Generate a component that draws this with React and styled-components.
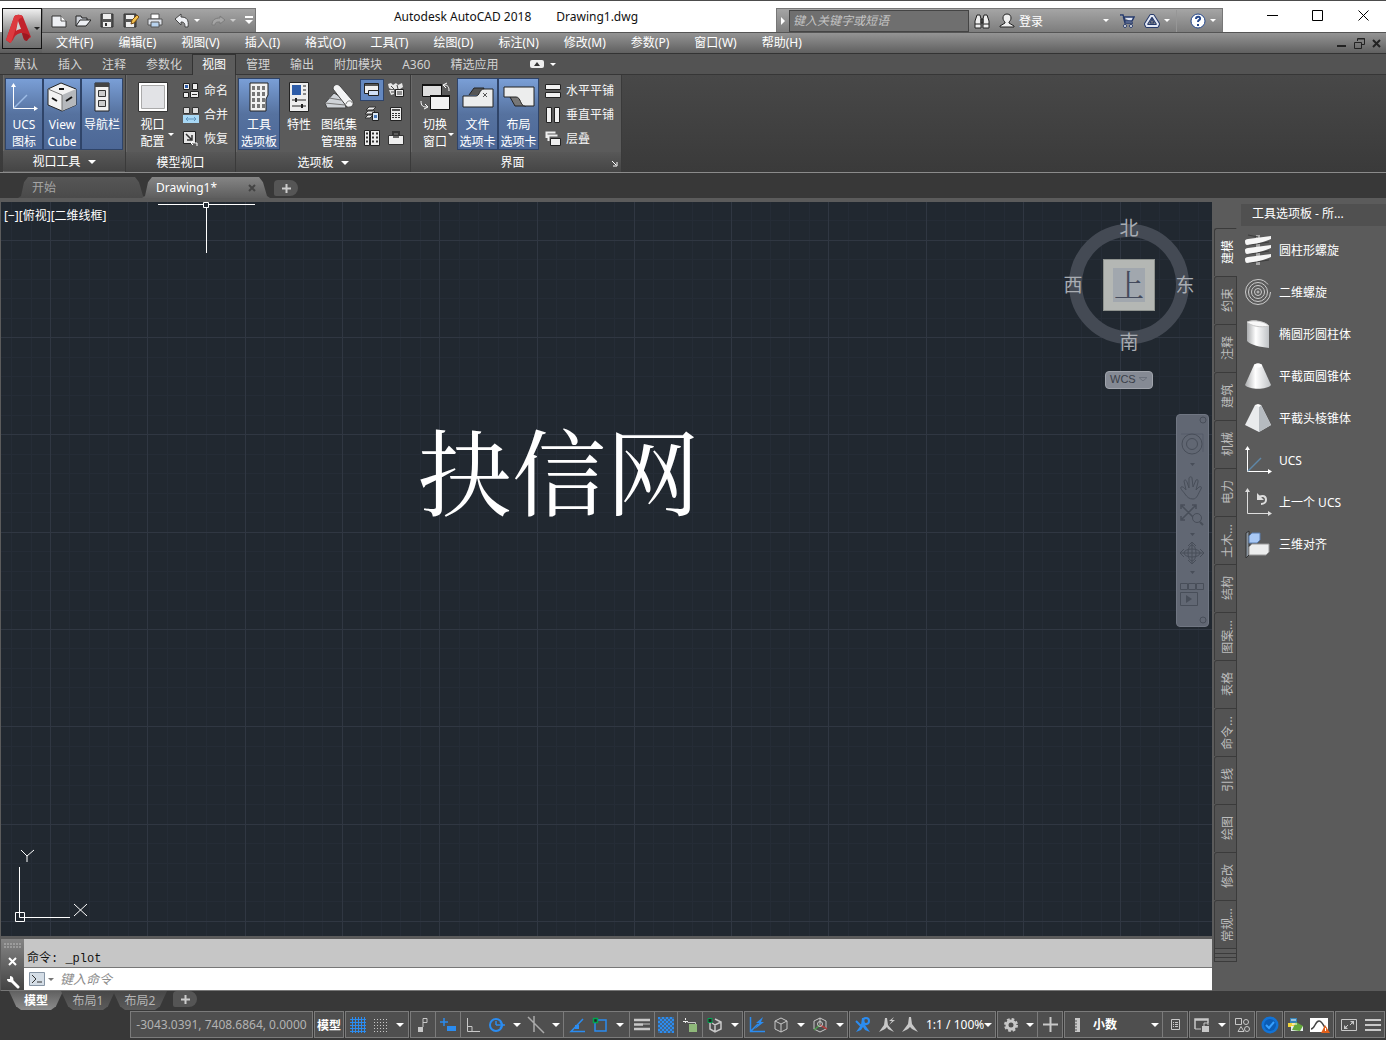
import { Fragment } from "react";
import styled, { createGlobalStyle } from "styled-components";

const GlobalStyle = createGlobalStyle`
* { box-sizing: border-box; }
body {
    margin: 0;
    background: #383838;
}
body, button, input, select {
    font-family: "Noto Sans", "Noto Sans CJK SC", sans-serif;
    font-size: 12px;
}
button {
    margin: 0;
    padding: 0;
    border: none;
    background: none;
    color: inherit;
}
svg { display: block; flex: none; }
`;

/* ---------- icons ---------- */

const Icon = ({ w = 16, h = w, vb, children }) => (
    <svg width={w} height={h} viewBox={vb || `0 0 ${w} ${h}`} fill="none" aria-hidden="true">{children}</svg>
);

const Caret = ({ color = "#fff", w = 8 }) => (
    <Icon w={w} h={w / 2} vb="0 0 8 4"><path d="M0 0h8L4 4z" fill={color} /></Icon>
);

const Logo = () => (
    <Icon w={26} h={30}>
        <path d="M0 26L8 3c1-3 8-3 9 0l8 20-4 3c-2 0-3-1-4-4l-1-3c-4 0-7 2-9 7l-3 3z" fill="#c3222b" />
        <path d="M8 3c1-3 8-3 9 0l-4 2L5 29l-5-3z" fill="#dd3a3f" />
        <path d="M12 7l3 8c-2 0-4 1-5 2z" fill="#d2d2d2" />
        <path d="M16 19c3 0 6 1 8 3l-3 5c-2 0-3-1-4-4z" fill="#9c1820" />
    </Icon>
);

const NewFile = () => <Icon><path d="M1 3h9l5 5v6H1z" fill="#eef0f4" stroke="#333" /><path d="M10 3v5h5" stroke="#555" fill="#fff" /></Icon>;
const OpenFile = () => <Icon><path d="M1 13V3h5l1 2h5v3" fill="#cfd3da" stroke="#222" /><path d="M1 13l4-6h11l-5 6z" fill="#eef0f4" stroke="#222" /></Icon>;
const Save = () => <Icon><path d="M2 1h12v13H2z" fill="#555" stroke="#333" /><path d="M4 1h8v5H4zM4 9h8v5H4z" fill="#eee" /><path d="M6 10h2v3H6z" fill="#333" /></Icon>;
const SaveAs = () => <Icon><path d="M1 1h12v13H1z" fill="#555" stroke="#333" /><path d="M3 2h8v4H3zM3 9h8v5H3z" fill="#eee" /><path d="M8 11l1-4 5-5 2 2-5 6z" fill="#f2c14e" stroke="#7a4d12" /></Icon>;
const Printer = () => <Icon><path d="M4 1h8v5H4z" fill="#fff" stroke="#555" /><path d="M1 6h14v6H1z" fill="#dfe3ea" stroke="#555" /><path d="M4 9h8v5H4z" fill="#b9d3ee" stroke="#555" /></Icon>;
const Undo = () => <Icon><path d="M1 6l6-5v3c6 0 8 3 7 10h-3c0-4-1-5-4-5v3z" fill="#eef0f4" stroke="#444" /></Icon>;
const Redo = () => <Icon><path d="M15 7L10 3v2C5 5 2 7 2 12h3c0-3 2-3 5-3v2z" fill="#a5a5a5" stroke="#7c7c7c" /></Icon>;
const QatMore = () => <Icon w={10} h={9}><path d="M1 0h8v2H1zM1 4h8L5 8z" fill="#fff" /></Icon>;
const Binoculars = () => <Icon><path d="M3 2h3l1 4v9H1V8zM10 2h3l2 6v7H9V6z" fill="#eee" stroke="#222" /><path d="M7 6h2v4H7zM1 11h6M9 11h6" stroke="#222" /></Icon>;
const User = () => <Icon><path d="M8 1c3 0 4 2 4 4s-1 3-2 4v1l5 3v1H1v-1l5-3V9C5 8 4 7 4 5s1-4 4-4z" fill="#eee" stroke="#222" /></Icon>;
const Cart = () => <Icon><path d="M1 2h3l2 8h8M5 4h10l-2 4H6z" fill="#dfe5f5" stroke="#263a6b" strokeWidth="1.500" /><circle cx="6" cy="13" r="1.500" fill="#fff" stroke="#263a6b" /><circle cx="12" cy="13" r="1.500" fill="#fff" stroke="#263a6b" /></Icon>;
const A360 = () => <Icon><path d="M7 3h2l5 8-1 2H3l-1-2z" stroke="#263a6b" strokeWidth="4" strokeLinejoin="round" /><path d="M7 3h2l5 8-1 2H3l-1-2z" stroke="#e4e9f5" strokeWidth="2" /><path d="M6 10l2-4 2 4z" stroke="#263a6b" /></Icon>;
const Help = () => <Icon><circle cx="8" cy="8" r="7" fill="#fff" stroke="#26488c" /><path d="M6 6c0-3 5-3 4 0 0 1-2 1-2 3M8 11v2" stroke="#26488c" strokeWidth="2" /></Icon>;
const WinMin = () => <Icon w={11}><path d="M0 5.500h11" stroke="#000" /></Icon>;
const WinMax = () => <Icon w={11}><path d="M.5.5h10v10H.5z" stroke="#000" /></Icon>;
const WinClose = () => <Icon w={11}><path d="M.5.5l10 10M10.500.5l-10 10" stroke="#000" /></Icon>;
const DocMin = () => <Icon w={10}><path d="M0 8h9" stroke="#222" strokeWidth="2" /></Icon>;
const DocMax = () => <Icon w={11}><path d="M3.500 3V.5h7v6H8" stroke="#222" /><path d="M.5 4.500h7v6h-7zM4 1h7" stroke="#222" /></Icon>;
const DocClose = () => <Icon w={9}><path d="M1 1l7 7M8 1L1 8" stroke="#222" strokeWidth="2" /></Icon>;

const UcsAxes = ({ diagonal = "#9dbce6" }) => (
    <Icon w={28} h={30}>
        <path d="M3.500 4v22.500H25" stroke="#fff" /><path d="M1 5l2.500-4L6 5zM24 24l4 2.500-4 2.500z" fill="#fff" />
        <path d="M4 26l13-13" stroke={diagonal} strokeWidth="1.500" />
    </Icon>
);
const ViewCubeIcon = () => (
    <Icon w={30}>
        <path d="M1 7l13-6 15 6v16l-14 6L1 23z" fill="#f2f2f2" stroke="#222" />
        <path d="M15 13l14-6v16l-14 6z" fill="#b5b8bc" /><path d="M1 7l14 6v16" stroke="#777" />
        <path d="M12 7h5M5 16l5 3M19 19l6-4" stroke="#111" strokeWidth="2" />
    </Icon>
);
const NavBarIcon = () => <Icon w={16} h={30}><path d="M1 1h14v28H1z" fill="#f2f2f2" stroke="#222" /><path d="M1 1h14v4H1z" fill="#444" /><path d="M4.500 8.500h7v6h-7zM4.500 18.500h7v6h-7z" fill="#ccc" stroke="#333" /></Icon>;
const ViewportIcon = () => <Icon w={30}><path d="M.5.5h29v29H.5z" fill="#fff" stroke="#333" /><path d="M3.500 3.500h23v23h-23z" fill="#e2e3e6" stroke="#aaa" /></Icon>;
const ToolPaletteIcon = () => (
    <Icon w={20} h={30}>
        <path d="M1 1h18v12l-2 4v12H1z" fill="#f2f2f2" stroke="#222" />
        {[4, 10, 16, 22].map((y) => <path key={y} d={`M3 ${y}h3v4H3zM8 ${y}h3v4H8zM13 ${y}h3v4h-3z`} fill="#777" />)}
    </Icon>
);
const PropertiesIcon = () => <Icon w={20} h={30}><path d="M.5.5h19v29H.5z" fill="#eee" stroke="#222" /><path d="M3 3h9v10H3z" fill="#2d5ca8" /><path d="M14 4h3M14 8h3M14 12h3M3 18h14M3 24h14" stroke="#222" /><path d="M7 16v4M13 22v4" stroke="#222" strokeWidth="2" /></Icon>;
const SheetSetIcon = () => (
    <Icon w={30} h={28}>
        <path d="M1 20l9-10 10 6 2 9H3z" fill="#cfd3d8" stroke="#444" /><path d="M1 20l20 2M5 15l12 2" stroke="#777" />
        <path d="M9 6c0-4 4-6 7-3l12 14c3 4 0 8-5 7z" fill="#f3f4f5" stroke="#444" /><path d="M28 20c0-3-5-3-6 1" stroke="#777" />
    </Icon>
);
const SwitchIcon = () => <Icon w={32} h={30}><path d="M3.500 2.500h19v12h-19z" fill="#ddd" stroke="#111" /><path d="M3 2h20v2H3z" fill="#111" /><path d="M11.500 13.500h19v14h-19z" fill="#f1f1f1" stroke="#111" /><path d="M11 13h20v2H11z" fill="#111" /><path d="M25 3c4 0 5 2 5 6M28 1l-4 2 3 3M2 19c0 5 2 6 6 6M6 22l3 3-4 2" stroke="#fff" /></Icon>;
const FileTabIcon = () => <Icon w={32} h={24}><path d="M7 10l5-7h10l-3 7" fill="#555" stroke="#222" /><path d="M1 22V11h13c4 0 3-7 8-7h9v18z" fill="#eceded" stroke="#222" /><path d="M21 8l4 4M25 8l-4 4" stroke="#555" /></Icon>;
const LayoutTabIcon = () => <Icon w={32} h={24}><path d="M7 12l5 9h11l-4-9" fill="#777" stroke="#222" /><path d="M1 2v10h12c5 0 4 9 9 9h9V2z" fill="#eceded" stroke="#222" /></Icon>;

const NamedIcon = () => <Icon><path d="M.5.5h6v6h-6zM9.500.5h5v6h-5zM.5 9.500h5v5h-5z" fill="#eee" stroke="#222" /><path d="M2 2h3v3H2z" fill="#2d5ca8" /><path d="M7.500 8.500h8v6h-8z" fill="#eee" stroke="#222" /><path d="M9 11.500h5" stroke="#333" /></Icon>;
const JoinIcon = () => <Icon><path d="M.5.5h6v6h-6zM9.500.5h6v6h-6z" fill="#ddd" stroke="#333" /><path d="M0 8h16v8H0z" fill="#a8d8f5" /><path d="M4 12h8M5 10l-2 2 2 2M11 10l2 2-2 2" stroke="#5f93ba" /></Icon>;
const RestoreIcon = () => <Icon><path d="M.5.5h12v12H.5z" fill="#e4e4e4" stroke="#222" /><path d="M3 3l6 6M9 4v5H4" stroke="#333" strokeWidth="1.500" /><path d="M8 12h6v3M10 10l-2 2 2 2" stroke="#fff" /></Icon>;
const CmdLineIcon = () => <Icon><path d="M.5 1.500h14v10H.5z" fill="#f0f0f0" stroke="#222" /><path d="M1 2h13v2H1z" fill="#555" /><path d="M4.500 8.500h10v5h-10z" fill="#cfe0f7" stroke="#222" /></Icon>;
const DesignIcon = () => <Icon><path d="M0 2l3-1 2 2 3-2 2 2 4-2 1 4-3 2H3L1 6zM1 8h5v4l-3 1z" fill="#e6e6e6" /><path d="M3 4l3 3M9 3l1 4M3 10h3" stroke="#444" /><path d="M7.500 7.500h8v7h-8z" fill="#eee" stroke="#222" /><path d="M9 10h5M9 12h5" stroke="#333" /></Icon>;
const LayersIcon = () => <Icon><path d="M5 1h7l-3 3H2zM4 5h7L8 8H1zM4 9h5l-3 3H1z" fill="#eee" stroke="#333" /><path d="M8.500 6.500h6v8h-6z" fill="#dce8f5" stroke="#222" /><path d="M10 9h3v3h-3z" fill="#4d7cba" /></Icon>;
const CalcIcon = () => <Icon><path d="M2.500 1.500h11v13h-11z" fill="#eee" stroke="#222" /><path d="M4 3h8v2H4z" fill="#555" />{[7, 9, 11].map((y) => <path key={y} d={`M4 ${y}.500h2M7 ${y}.500h2M10 ${y}.500h2`} stroke="#333" />)}</Icon>;
const SheetIcon = () => <Icon><path d="M.5.5h5v15h-5z" fill="#eee" stroke="#222" /><path d="M6.500.5h9v15h-9z" fill="#eee" stroke="#222" /><path d="M2 3.500h2M2 7.500h2M2 11.500h2M8 3.500h2M12 3.500h2M8 7.500h2M12 7.500h2M8 11.500h2M12 11.500h2" stroke="#333" strokeWidth="2" /></Icon>;
const ToolboxIcon = () => <Icon><path d="M.5 5.500h15v9H.5z" fill="#eee" stroke="#333" /><path d="M5 5V2h6v3" stroke="#333" strokeWidth="2" /><path d="M5 6h6v2H5z" fill="#666" /></Icon>;
const TileHIcon = () => <Icon><path d="M.5 1.500h15v5H.5zM.5 9.500h15v5H.5z" fill="#f1f1f1" stroke="#222" /></Icon>;
const TileVIcon = () => <Icon><path d="M1.500.5h5v15h-5zM9.500.5h5v15h-5z" fill="#f1f1f1" stroke="#222" /></Icon>;
const CascadeIcon = () => <Icon><path d="M1.500 7V1.500h9M3.500 10V4.500h9" stroke="#eee" strokeWidth="2" /><path d="M5.500 7.500h10v7h-10z" fill="#eee" stroke="#222" /></Icon>;

/* ---------- layout ---------- */

const Page = styled.div`
display: flex;
flex-direction: column;
min-height: 100vh;
border-top: 1px solid #4c4c4c;
background: #383838;
color: #f0f0f0;
`;

const Header = styled.header`
display: grid;
grid-template-columns: 42px 1fr;
background: linear-gradient(#fff 31px, #939393 31px, #5b5b5b);
`;

const AppButton = styled.button`
display: flex;
align-items: center;
gap: 2px;
height: 41px;
margin: 7px 0 4px 2px;
padding-left: 3px;
border: 1px solid #111;
background: linear-gradient(#efefef, #8a8a8a 60%, #6e6e6e);
`;

const TitleBar = styled.div`
display: flex;
align-items: flex-end;
height: 31px;
background: #fff;
`;

const Toolbar = styled.div`
display: flex;
align-items: center;
height: 24px;
border: 1px solid #777;
border-bottom: none;
background: linear-gradient(#a5a5a5, #7d7d7d);
`;

const Divider = styled.span`
width: 1px;
height: 22px;
margin: 0 6px;
background: #969696;
`;

const ToolButton = styled.button`
display: flex;
align-items: center;
justify-content: center;
gap: 4px;
width: ${(p) => p.$w}px;
height: 22px;
`;

const Title = styled.h1`
flex: 1;
margin: 0;
padding-bottom: 7px;
font-size: 12px;
font-weight: 400;
line-height: 17px;
text-align: center;
white-space: pre;
color: #111;
`;

const Search = styled.input`
width: 180px;
height: 22px;
padding: 0 3px;
border: 1px solid #444;
background: #6f6f6f;
color: #fff;
outline: none;

&::placeholder {
    font-style: italic;
    color: #c4c4c4;
    opacity: 1;
}
`;

const Login = styled.button`
display: flex;
align-items: center;
justify-content: space-between;
width: 90px;
color: #fff;
`;

const WindowButtons = styled.div`
display: flex;
height: 31px;
padding-left: 26px;
`;

const WindowButton = styled.button`
display: grid;
place-items: center;
width: ${(p) => p.$w || 46}px;
height: 29px;
`;

const MenuBar = styled.nav`
display: flex;
align-items: center;
gap: 25px;
height: 21px;
padding: 0 5px 0 14px;
border-top: 1px solid #555;
background: linear-gradient(#949494, #606060);
color: #fff;
line-height: 18px;
`;

const DocButtons = styled.div`
display: flex;
gap: 7px;
margin-left: auto;
`;

const RibbonTabs = styled.div`
display: flex;
align-items: stretch;
height: 22px;
padding-left: 4px;
border-top: 1px solid #333;
border-bottom: 1px solid #363636;
background: #535353;
`;

const RibbonTab = styled.button`
height: 21px;
padding: 0 10px;
line-height: 20px;
color: #d2d2d2;
${(p) => p.$active && `
    background: #5c5c5c;
    color: #fff;
    box-shadow: inset 1px 1px #333, inset -1px 0 #333;
`}
`;

const RibbonToggle = styled.button`
display: flex;
align-items: center;
gap: 6px;
margin-left: 22px;
`;

const Ribbon = styled.div`
display: flex;
padding-left: 3px;
border-bottom: 1px solid #8b8b8b;
background: linear-gradient(#484848, #3a3a3a);
`;

const RibbonPanel = styled.section`
display: flex;
flex-direction: column;
border-right: 1px solid #3a3a3a;
background: #5b5b5b;
box-shadow: inset 1px 0 #6a6a6a;
`;

const PanelBody = styled.div`
display: flex;
padding: 3px 2px 1px;
`;

const PanelTitle = styled.div`
display: flex;
align-items: center;
justify-content: center;
gap: 7px;
height: 20px;
padding-top: 2px;
background: linear-gradient(#585858, #454545);
color: #fff;
line-height: 18px;
`;

const Launcher = styled.button`
margin-left: auto;
padding-right: 3px;
`;

const BigButton = styled.button`
position: relative;
display: flex;
flex-direction: column;
align-items: center;
width: ${(p) => p.$w}px;
height: 72px;
line-height: 17px;
white-space: pre;
color: #fff;
${(p) => p.$active && `
    background: linear-gradient(#7ba0d8, #56729f 50%, #4c6796);
    box-shadow: inset 0 0 0 1px #2f4469;
`}

.icon {
    display: grid;
    place-items: center;
    height: 38px;
}
.caret {
    position: absolute;
    right: 3px;
    bottom: 14px;
}
`;

const SmallList = styled.div`
display: grid;
grid-template-columns: repeat(${(p) => p.$cols || 1}, auto);
grid-auto-rows: 24px;
padding-top: 1px;
`;

const SmallButton = styled.button`
display: flex;
align-items: center;
gap: 5px;
padding: 0 5px 0 6px;
line-height: 20px;
color: #f5f5f5;
`;

const IconButton = styled.button`
display: grid;
place-items: center;
width: 24px;
height: 22px;
${(p) => p.$active && `
    background: #6488c0;
    box-shadow: inset 0 0 0 1px #2f4469;
`}
`;

const FileTabs = styled.div`
display: flex;
align-items: flex-end;
height: 29px;
padding-left: 18px;
border-bottom: 4px solid #5b5b5b;
`;

const FileTab = styled.div`
display: flex;
align-items: center;
justify-content: space-between;
width: 128px;
height: 21px;
margin-right: -4px;
padding: 0 14px;
background: ${(p) => (p.$active ? "linear-gradient(#858585, #5e5e5e)" : "linear-gradient(#565656, #4a4a4a)")};
clip-path: polygon(0 100%, 3px 90%, 6px 25%, 10px 0, calc(100% - 11px) 0, calc(100% - 7px) 25%, calc(100% - 3px) 90%, 100% 100%);
color: ${(p) => (p.$active ? "#fff" : "#a5a5a5")};
line-height: 20px;
`;

const AddTab = styled.button`
display: grid;
place-items: center;
width: 24px;
height: 16px;
margin: 0 0 2px 8px;
background: #555;
border-radius: 4px 8px 8px 2px;
`;

const Workspace = styled.main`
flex: 1;
display: flex;
border-left: 1px solid #5b5b5b;
`;

const DrawArea = styled.div`
flex: 1;
display: flex;
flex-direction: column;
min-width: 0;
`;

const Canvas = styled.div`
flex: 1;
position: relative;
overflow: hidden;
background: #212830;
`;

const GridLayer = styled.svg`
position: absolute;
inset: 0;
`;

const Placed = styled.div`
position: absolute;
left: ${(p) => p.$left};
right: ${(p) => p.$right};
top: ${(p) => p.$top};
bottom: ${(p) => p.$bottom};
`;

const ViewLabel = styled(Placed)`
line-height: 18px;
color: #fff;
`;

const DrawnText = styled(Placed)`
font-family: SimSun, "Noto Serif CJK SC", "Noto Sans CJK SC", serif;
font-size: 94px;
font-weight: 400;
line-height: 94px;
white-space: nowrap;
color: #fff;
`;

const Compass = styled(Placed)`
display: grid;
grid-template-columns: 24px 1fr 24px;
grid-template-rows: 24px 1fr 24px;
place-items: center;
width: 136px;
height: 138px;
font-size: 19px;
line-height: 24px;
color: #a9adb3;

&::before {
    content: "";
    position: absolute;
    inset: 8px 8px 10px;
    border: 13px solid #444a54;
    border-radius: 50%;
}
span { z-index: 1; }
.n, .s { grid-column: 1 / 4; }
`;

const CubeFace = styled.button`
display: grid;
place-items: center;
width: 52px;
height: 52px;
border: 1px solid #8f938f;
background: #b4b7b4;

span {
    width: 32px;
    height: 34px;
    background: #a1a7ae;
    font-family: SimSun, "Noto Serif CJK SC", "Noto Sans CJK SC", serif;
    font-size: 30px;
    line-height: 30px;
    color: #454b5c;
}
`;

const WcsButton = styled(Placed).attrs({ as: "button" })`
display: flex;
align-items: center;
justify-content: space-between;
width: 48px;
height: 18px;
padding: 0 5px 2px 4px;
border: 1px solid #a0a4ac;
border-radius: 4px;
background: #858a94;
font-family: "Liberation Sans", sans-serif;
font-size: 11px;
color: #3a3f49;
`;

const NavBar = styled(Placed)`
display: flex;
flex-direction: column;
align-items: center;
width: 33px;
height: 213px;
border-radius: 4px;
border: 1px solid #707682;
background: #616773;
`;

const CommandLine = styled.section`
display: grid;
grid-template-columns: 23px 1fr;
height: 55px;
border-top: 3px solid #5b5b5b;
border-bottom: 1px solid #777;
`;

const CommandHandle = styled.div`
display: flex;
flex-direction: column;
align-items: center;
justify-content: space-between;
padding: 4px 0 1px;
background: linear-gradient(#848484, #444);
`;

const History = styled.div`
height: 29px;
padding: 10px 3px 0;
border-bottom: 1px solid #777;
background: #c6c6c6;
font-family: "Liberation Mono", "Noto Sans CJK SC", monospace;
line-height: 20px;
color: #111;
white-space: pre;
`;

const Prompt = styled.label`
display: flex;
align-items: center;
gap: 3px;
height: 22px;
padding-left: 5px;
background: #fff;

input {
    flex: 1;
    padding: 0 3px;
    border: none;
    outline: none;
    font-size: 13px;
}
input::placeholder {
    font-style: italic;
    color: #8c8c8c;
    opacity: 1;
}
`;

const Palette = styled.aside`
display: grid;
grid-template-columns: 23px 1fr;
grid-template-rows: 26px 1fr;
width: 174px;
padding-left: 2px;
background: #5b5b5b;
`;

const PaletteTitle = styled.div`
grid-column: 2;
margin: 2px 0 2px 4px;
padding-left: 11px;
background: #505050;
line-height: 20px;
color: #fff;
white-space: nowrap;
`;

const PaletteTabs = styled.div`
grid-row: 2;
grid-column: 1;
`;

const PaletteTab = styled.button`
display: grid;
place-items: center;
width: 23px;
height: 48px;
padding-left: 4px;
border: 1px solid #3b3b3b;
border-bottom: none;
border-radius: 3px 0 0 0;
background: ${(p) => (p.$active ? "#5b5b5b" : "#535353")};
border-right-color: ${(p) => (p.$active ? "#5b5b5b" : "#3b3b3b")};
color: ${(p) => (p.$active ? "#fff" : "#bdbdbd")};

span {
    writing-mode: vertical-rl;
    text-orientation: sideways;
    transform: rotate(180deg);
    line-height: 18px;
}
`;

const TabStack = styled.div`
height: ${(p) => p.$h}px;
border: 1px solid #3b3b3b;
border-bottom-width: ${(p) => (p.$last ? 1 : 0)}px;
`;

const Tools = styled.div`
padding-left: 6px;
padding-top: 1px;
`;

const Tool = styled.button`
display: flex;
align-items: center;
gap: 6px;
height: 42px;
color: #fff;
white-space: nowrap;

.icon {
    display: grid;
    place-items: center;
    width: 30px;
}
`;

const LayoutTabs = styled.div`
display: flex;
align-items: flex-start;
height: 20px;
padding-left: 9px;
`;

const LayoutTab = styled.button`
width: 54px;
height: 19px;
margin-right: -2px;
background: ${(p) => (p.$active ? "linear-gradient(#606060, #8c8c8c)" : "linear-gradient(#474747, #5c5c5c)")};
clip-path: polygon(0 0, 100% 0, calc(100% - 7px) 80%, calc(100% - 12px) 100%, 12px 100%, 7px 80%);
color: ${(p) => (p.$active ? "#fff" : "#b5b5b5")};
font-weight: ${(p) => (p.$active ? 700 : 400)};
line-height: 19px;
`;

const StatusBar = styled.footer`
display: flex;
justify-content: flex-end;
gap: 1px;
height: 29px;
padding: 0 1px 2px;
`;

const StatusGroup = styled.div`
display: flex;
height: 27px;
border: 1px solid #7b7b7b;
background: #4f4f4f;
`;

const StatusCell = styled.button`
display: flex;
align-items: center;
justify-content: center;
width: ${(p) => p.$w}px;
color: #fff;
font-weight: ${(p) => (p.$bold ? 700 : 400)};
white-space: nowrap;
${(p) => p.$sep && "border-left: 1px solid #7b7b7b;"}
`;

const Coords = styled(StatusCell)`
color: #b3b3b3;
`;

const StatusSelect = styled.label`
display: flex;
align-items: center;
width: 73px;
padding: 0 3px 0 4px;

select {
    width: 58px;
    padding: 0;
    appearance: none;
    border: none;
    outline: none;
    background: transparent;
    color: #fff;
    font-weight: ${(p) => (p.$bold ? 700 : 400)};
    text-overflow: clip;
}
`;

/* ---------- header ---------- */

const menus = ["文件(F)", "编辑(E)", "视图(V)", "插入(I)", "格式(O)", "工具(T)", "绘图(D)", "标注(N)", "修改(M)", "参数(P)", "窗口(W)", "帮助(H)"];
const ribbonTabs = ["默认", "插入", "注释", "参数化", "视图", "管理", "输出", "附加模块", "A360", "精选应用"];

const MenuItem = styled.button`
color: #fff;
line-height: 18px;
`;

function TopBar() {
    return (
        <Header>
            <AppButton aria-label="应用程序菜单"><Logo /><Caret color="#222" w={6} /></AppButton>
            <div>
                <TitleBar>
                    <Toolbar>
                        <ToolButton $w={32} aria-label="新建"><NewFile /></ToolButton>
                        <ToolButton $w={16} aria-label="打开"><OpenFile /></ToolButton>
                        <ToolButton $w={32} aria-label="保存"><Save /></ToolButton>
                        <ToolButton $w={16} aria-label="另存为"><SaveAs /></ToolButton>
                        <ToolButton $w={32} aria-label="打印"><Printer /></ToolButton>
                        <ToolButton $w={32} aria-label="放弃"><Undo /><Caret w={6} /></ToolButton>
                        <ToolButton $w={40} aria-label="重做"><Redo /><Caret color="#ccc" w={6} /></ToolButton>
                        <ToolButton $w={12} aria-label="自定义"><QatMore /></ToolButton>
                    </Toolbar>
                    <Title>{"Autodesk AutoCAD 2018        Drawing1.dwg"}</Title>
                    <Toolbar>
                        <ToolButton $w={12} aria-label="折叠"><Icon w={4} h={8}><path d="M0 0v8l4-4z" fill="#fff" /></Icon></ToolButton>
                        <Search aria-label="搜索" placeholder="键入关键字或短语" />
                        <ToolButton $w={26} aria-label="搜索"><Binoculars /></ToolButton>
                        <ToolButton $w={24} aria-label="用户"><User /></ToolButton>
                        <Login>登录<Caret w={6} /></Login>
                        <ToolButton $w={35} aria-label="商店"><Cart /></ToolButton>
                        <ToolButton $w={26} aria-label="保持连接"><A360 /><Caret w={6} /></ToolButton>
                        <Divider />
                        <ToolButton $w={39} aria-label="帮助"><Help /><Caret w={6} /></ToolButton>
                    </Toolbar>
                    <WindowButtons>
                        <WindowButton aria-label="最小化"><WinMin /></WindowButton>
                        <WindowButton $w={45} aria-label="最大化"><WinMax /></WindowButton>
                        <WindowButton aria-label="关闭"><WinClose /></WindowButton>
                    </WindowButtons>
                </TitleBar>
                <MenuBar>
                    {menus.map((m) => <MenuItem key={m}>{m}</MenuItem>)}
                    <DocButtons>
                        <button aria-label="最小化图形"><DocMin /></button>
                        <button aria-label="还原图形"><DocMax /></button>
                        <button aria-label="关闭图形"><DocClose /></button>
                    </DocButtons>
                </MenuBar>
            </div>
        </Header>
    );
}

function Big({ icon, label, w, active, caret }) {
    return (
        <BigButton $w={w} $active={active}>
            <span className="icon">{icon}</span>
            {label}
            {caret && <span className="caret"><Caret w={6} /></span>}
        </BigButton>
    );
}

function RibbonBar() {
    return (
        <>
            <RibbonTabs>
                {ribbonTabs.map((t) => <RibbonTab key={t} $active={t === "视图"}>{t}</RibbonTab>)}
                <RibbonToggle aria-label="最小化功能区">
                    <Icon w={14} h={10}><rect x="0" y="1" width="14" height="8" rx="2" fill="#eee" /><path d="M4 7h6L7 3z" fill="#333" /></Icon>
                    <Caret w={6} />
                </RibbonToggle>
            </RibbonTabs>
            <Ribbon>
                <RibbonPanel>
                    <PanelBody>
                        <Big w={38} active icon={<UcsAxes />} label={"UCS\n图标"} />
                        <Big w={38} active icon={<ViewCubeIcon />} label={"View\nCube"} />
                        <Big w={42} active icon={<NavBarIcon />} label="导航栏" />
                    </PanelBody>
                    <PanelTitle>视口工具<Caret /></PanelTitle>
                </RibbonPanel>
                <RibbonPanel>
                    <PanelBody>
                        <Big w={49} caret icon={<ViewportIcon />} label={"视口\n配置"} />
                        <SmallList>
                            <SmallButton><NamedIcon />命名</SmallButton>
                            <SmallButton><JoinIcon />合并</SmallButton>
                            <SmallButton><RestoreIcon />恢复</SmallButton>
                        </SmallList>
                    </PanelBody>
                    <PanelTitle>模型视口</PanelTitle>
                </RibbonPanel>
                <RibbonPanel>
                    <PanelBody>
                        <Big w={42} active icon={<ToolPaletteIcon />} label={"工具\n选项板"} />
                        <Big w={38} icon={<PropertiesIcon />} label="特性" />
                        <Big w={42} icon={<SheetSetIcon />} label={"图纸集\n管理器"} />
                        <SmallList $cols={2}>
                            <IconButton $active aria-label="命令行"><CmdLineIcon /></IconButton>
                            <IconButton aria-label="设计中心"><DesignIcon /></IconButton>
                            <IconButton aria-label="图层特性"><LayersIcon /></IconButton>
                            <IconButton aria-label="快速计算器"><CalcIcon /></IconButton>
                            <IconButton aria-label="标记集"><SheetIcon /></IconButton>
                            <IconButton aria-label="外部参照"><ToolboxIcon /></IconButton>
                        </SmallList>
                    </PanelBody>
                    <PanelTitle>选项板<Caret /></PanelTitle>
                </RibbonPanel>
                <RibbonPanel>
                    <PanelBody>
                        <Big w={44} caret icon={<SwitchIcon />} label={"切换\n窗口"} />
                        <Big w={41} active icon={<FileTabIcon />} label={"文件\n选项卡"} />
                        <Big w={41} active icon={<LayoutTabIcon />} label={"布局\n选项卡"} />
                        <SmallList>
                            <SmallButton><TileHIcon />水平平铺</SmallButton>
                            <SmallButton><TileVIcon />垂直平铺</SmallButton>
                            <SmallButton><CascadeIcon />层叠</SmallButton>
                        </SmallList>
                    </PanelBody>
                    <PanelTitle>
                        <Launcher as="span" />
                        界面
                        <Launcher aria-label="界面选项"><Icon w={7}><path d="M1 1l4 4M6 2v4H2" stroke="#fff" /></Icon></Launcher>
                    </PanelTitle>
                </RibbonPanel>
            </Ribbon>
            <FileTabs>
                <FileTab>开始</FileTab>
                <FileTab $active>
                    Drawing1*
                    <button aria-label="关闭"><Icon w={8}><path d="M1 1l6 6M7 1L1 7" stroke="#444" strokeWidth="2" /></Icon></button>
                </FileTab>
                <AddTab aria-label="新图形"><Icon w={9}><path d="M4.500 0v9M0 4.500h9" stroke="#ccc" strokeWidth="2" /></Icon></AddTab>
            </FileTabs>
        </>
    );
}

/* ---------- drawing area ---------- */

// every fifth line of the drawing grid is a major one
const STEP = 97.3 / 5;
const gridLines = (origin, count) =>
    Array.from({ length: count }, (_, i) => ({ at: Math.round(origin + i * STEP) + 0.5, major: i % 5 === 0 }));
const columns = gridLines(-48.3, 220);
const rows = gridLines(-59.5, 140);

function DrawingGrid() {
    const line = (l, vertical) => (
        <path
            key={(vertical ? "v" : "h") + l.at}
            d={vertical ? `M${l.at} 0V3000` : `M0 ${l.at}H4200`}
            stroke={l.major ? "#303742" : "#252c36"}
        />
    );
    return (
        <GridLayer width="100%" height="100%" aria-hidden="true">
            {[false, true].map((major) => (
                <Fragment key={String(major)}>
                    {columns.filter((l) => l.major === major).map((l) => line(l, true))}
                    {rows.filter((l) => l.major === major).map((l) => line(l, false))}
                </Fragment>
            ))}
        </GridLayer>
    );
}

const NavIcons = () => (
    <Icon w={31} h={211}>
        <g stroke="#484e59">
            <circle cx="26" cy="5" r="3" /><circle cx="26" cy="205" r="3" />
            <path d="M4 19h22v18" strokeOpacity=".4" /><circle cx="15" cy="29" r="10" /><circle cx="15" cy="29" r="5.500" />
            <path d="M8 79c-2-3-5-5-4-7 2-1 4 2 5 3l-2-9c1-2 2-1 3 1l2 6 0-10c1-2 3-1 3 0l1 9 3-7c2-1 2 0 2 2l-2 8 3-3c2-1 3 0 2 2-3 5-4 10-8 10-4 0-6-2-8-5z" />
            <path d="M5 91l13 13M18 91L5 104M4 94v-4h4M15 90h4v4M4 101v4h4" strokeWidth="1.500" /><circle cx="20" cy="103" r="4.500" fill="#616773" /><path d="M23 107l3 3" strokeWidth="2" />
            <path d="M15 127v22M4 138h22M11 131l4-4 4 4M11 145l4 4 4-4M7 134l-4 4 4 4M23 134l4 4-4 4" /><ellipse cx="15" cy="138" rx="8" ry="4" /><ellipse cx="15" cy="138" rx="4" ry="8" />
            <path d="M3.500 168.500h7v6h-7zM11.500 168.500h7v6h-7zM19.500 168.500h7v6h-7zM3.500 177.500h17v13h-17z" />
        </g>
        <path d="M9 180v8l6-4zM13 48h5l-2.500 3zM13 118h5l-2.500 3zM13 156h5l-2.500 3z" fill="#484e59" />
    </Icon>
);

function DrawingCanvas() {
    return (
        <Canvas>
            <DrawingGrid />
            <ViewLabel $left="3px" $top="5px">[−][俯视][二维线框]</ViewLabel>
            <Placed $left="157px" $top="0">
                <Icon w={98} h={52}><path d="M0 2.500h46M51 2.500h46M48.500 6v45" stroke="#fff" /><path d="M45.500.5h5v5h-5z" stroke="#fff" /></Icon>
            </Placed>
            <DrawnText $left="417px" $top="220px">抉信网</DrawnText>
            <Compass $right="15px" $top="14px">
                <span className="n">北</span>
                <span>西</span>
                <CubeFace aria-label="上视图"><span>上</span></CubeFace>
                <span>东</span>
                <span className="s">南</span>
            </Compass>
            <WcsButton $right="59px" $top="169px">WCS<Icon w={8} h={4}><path d="M0 .5h8L4 4z" stroke="#6c727d" /></Icon></WcsButton>
            <NavBar $right="3px" $top="212px"><NavIcons /></NavBar>
            <Placed $left="13px" $bottom="12px">
                <Icon w={76} h={76}>
                    <path d="M5.500 19v50.500H56M1.500 64.500h9v9h-9z" stroke="#fff" />
                    <path d="M7 2l6 6v6M20 2l-7 6M60 56l13 12M73 56L60 68" stroke="#fff" />
                </Icon>
            </Placed>
        </Canvas>
    );
}

function Command() {
    return (
        <CommandLine>
            <CommandHandle>
                <Icon w={17} h={5}><path d="M0 1h17M0 4h17" stroke="#bbb" strokeDasharray="2 1" /></Icon>
                <button aria-label="关闭"><Icon w={9}><path d="M1 1l7 7M8 1L1 8" stroke="#fff" strokeWidth="2" /></Icon></button>
                <button aria-label="自定义"><Icon w={14}><path d="M5 5l7 7" stroke="#fff" strokeWidth="3" strokeLinecap="round" /><path d="M4 1l0 3-3 0c0 4 5 4 6 2 1-2 0-5-3-5z" fill="#fff" /></Icon></button>
            </CommandHandle>
            <div>
                <History>命令: _plot</History>
                <Prompt>
                    <Icon w={16} h={14}><path d="M.5.5h15v13H.5z" fill="#d4dde6" stroke="#8795a5" /><path d="M3 3l4 4-4 4M8 10h5" stroke="#333" /></Icon>
                    <Caret color="#777" w={6} />
                    <input aria-label="命令" placeholder="键入命令" />
                </Prompt>
            </div>
        </CommandLine>
    );
}

/* ---------- tool palette ---------- */

const paletteTabs = ["建模", "约束", "注释", "建筑", "机械", "电力", "土木...", "结构", "图案...", "表格", "命令...", "引线", "绘图", "修改", "常规..."];

const Metal = ({ id }) => (
    <linearGradient id={id}><stop offset="0" stopColor="#a9abad" /><stop offset=".4" stopColor="#fff" /><stop offset="1" stopColor="#bfc2c5" /></linearGradient>
);

const Helix = () => (
    <Icon w={28} h={32}>
        <path d="M12 1h4v30h-4z" fill="#a5a5a5" />
        <path d="M4 1l10 2M5 11l20-3M5 20l20-3M5 29l20-3" stroke="#3c3c3c" />
        {[1, 10, 19].map((y) => <path key={y} d={`M1 ${y + 6}c0-1 1-2 3-2l23-3v3c-6 3-16 5-24 6-1 0-2-1-2-4z`} fill="#f6f6f6" />)}
    </Icon>
);
const Spiral = () => <Icon w={28}><circle cx="14" cy="14" r="12.500" stroke="#ccc" strokeDasharray="70 9" /><circle cx="14" cy="14" r="9.500" stroke="#ccc" /><circle cx="14" cy="14" r="6.500" stroke="#ccc" /><circle cx="14" cy="14" r="3.500" stroke="#ccc" /><circle cx="14" cy="14" r="1" stroke="#ccc" /></Icon>;
const EllipticCylinder = () => <Icon w={26} h={30}><Metal id="ecyl" /><path d="M2 3c7-3 19 0 22 4v22C15 28 6 26 2 22z" fill="url(#ecyl)" /><path d="M2 3c7-3 19 0 22 4C15 9 6 7 2 3z" fill="#f8f8f8" stroke="#c5c5c5" /></Icon>;
const Cone = () => <Icon w={28}><Metal id="cone" /><path d="M10 3c2-2 6-2 8 0l9 20c-4 5-22 5-26 0z" fill="url(#cone)" /><ellipse cx="14" cy="3.500" rx="4" ry="2" fill="#fff" /></Icon>;
const Pyramid = () => <Icon w={28} h={30}><path d="M11 2h6l10 20-12 7-14-7z" fill="#e9ebed" /><path d="M15 4l2-2 10 20-12 7z" fill="#b6bbc0" /><path d="M11 2l3-1 3 1-2 2z" fill="#fff" /></Icon>;
const PrevUcs = () => (
    <Icon w={28} h={30}>
        <path d="M3.500 4v22.500H25" stroke="#ddd" /><path d="M1 5l2.500-4L6 5zM24 24l4 2.500-4 2.500z" fill="#ddd" />
        <path d="M13 6v7h7z" fill="#ddd" /><path d="M15 10c4-2 7-1 7 3 0 2-2 4-5 4" stroke="#ddd" strokeWidth="2" />
    </Icon>
);
const Align3d = () => <Icon w={26} h={28}><path d="M1 3l3-2v24l-3 3z" fill="#8a949e" stroke="#333" /><path d="M4 6l3-3h8v7l-3 3H4z" fill="#a9c9f5" stroke="#5b7eb0" /><path d="M4 17l3-3h17v8l-3 3H4z" fill="#eceded" stroke="#999" /></Icon>;

const tools = [
    ["圆柱形螺旋", Helix],
    ["二维螺旋", Spiral],
    ["椭圆形圆柱体", EllipticCylinder],
    ["平截面圆锥体", Cone],
    ["平截头棱锥体", Pyramid],
    ["UCS", () => <UcsAxes diagonal="#5f87a8" />],
    ["上一个 UCS", PrevUcs],
    ["三维对齐", Align3d],
];

function ToolPalette() {
    return (
        <Palette>
            <PaletteTitle>工具选项板 - 所...</PaletteTitle>
            <PaletteTabs>
                {paletteTabs.map((t, i) => <PaletteTab key={t} $active={i === 0}><span>{t}</span></PaletteTab>)}
                <TabStack $h={5} />
                <TabStack $h={4} />
                <TabStack $h={5} $last />
            </PaletteTabs>
            <Tools>
                {tools.map(([name, ToolIcon]) => (
                    <Tool key={name}><span className="icon"><ToolIcon /></span>{name}</Tool>
                ))}
            </Tools>
        </Palette>
    );
}

/* ---------- status bar ---------- */

const BLUE = "#2b8cf0";
const GREY = "#c8c8c8";
const ticks = [2, 5, 8, 11, 14];
const checks = [0, 2, 4, 6, 8, 10, 12, 14];

const st = {
    caret: <Caret />,
    grid: <Icon><path d={ticks.map((n) => `M${n}.500 0v16M0 ${n}.500h16`).join("")} stroke={BLUE} /></Icon>,
    dots: <Icon><path d={ticks.map((n) => `M1 ${n}.500h14`).join("")} stroke={GREY} strokeDasharray="1 2" /></Icon>,
    infer: <Icon><path d="M8 10V1.500h4v4H8M3.500 10.500h4v4h-4z" stroke={GREY} /><path d="M3 10h5v5H3z" fill={GREY} /></Icon>,
    dyn: <Icon><path d="M4 1v8M0 5h8" stroke={BLUE} strokeWidth="1.500" /><path d="M7 9h9v5H7z" fill={BLUE} /></Icon>,
    ortho: <Icon><path d="M2.500 1v13.500H15M2 9.500h5V14" stroke={GREY} /></Icon>,
    polar: <Icon><circle cx="7" cy="8" r="6" stroke={BLUE} strokeWidth="2" /><path d="M7 8h9M7 4v4M11 5l3 3-3 3" stroke={BLUE} strokeWidth="1.500" /></Icon>,
    iso: <Icon w={18}><path d="M1 1l16 16M7 0v16" stroke="#aaa" strokeWidth="1.500" /></Icon>,
    track: <Icon><path d="M14 2L2 14.500h14" stroke={BLUE} strokeWidth="1.500" /><path d="M6 8h4v4H6z" fill={BLUE} /></Icon>,
    osnap: <Icon><path d="M3 3h11v11H3z" stroke={BLUE} strokeWidth="1.500" /><path d="M1.500 1.500h4v4h-4z" fill="#222" stroke="#00a550" strokeWidth="1.500" /></Icon>,
    weight: <Icon><path d="M0 3h16M0 7.500h9M0 12h16" stroke={GREY} strokeWidth="2.500" /><path d="M9 7h7" stroke={GREY} /></Icon>,
    trans: <Icon><path d="M0 0h16v16H0z" fill={BLUE} opacity=".4" /><path d={checks.map((n, i) => `M${(i % 2) * 2} ${n + 1}H16`).join("")} stroke={BLUE} strokeWidth="2" strokeDasharray="2 2" /></Icon>,
    cycle: <Icon><path d="M3.500 1v6M1 4.500h6" stroke="#eee" strokeDasharray="2 1" /><path d="M5.500 5.500h8v6" stroke={GREY} /><path d="M7 7h8v8H7z" fill="#8fb87a" /></Icon>,
    osnap3d: <Icon><path d="M8 2l6 3v7l-6 3-5-3V6M14 5L8 8 5 6M8 8v7" stroke={GREY} strokeWidth="1.500" /><path d="M1 1.500h4v4H1z" fill="#222" stroke="#00a550" /></Icon>,
    ucs: <Icon><path d="M1.500 0v14.500H16M2 14L9 7" stroke={BLUE} strokeWidth="1.500" /><path d="M14 0L7 6h3L6 12l9-7h-3z" fill={BLUE} /></Icon>,
    cube: <Icon><path d="M8 1l6 3v8l-6 3-6-3V4zM2 4l6 3 6-3M8 7v8" stroke={GREY} /></Icon>,
    gizmo: <Icon><path d="M8 1l6 3v8l-6 3-6-3V4z" stroke={GREY} /><path d="M8 1v7" stroke={GREY} /><path d="M8 8l-6 5" stroke="#4a9a4a" strokeWidth="1.500" /><path d="M8 8l7 4" stroke="#b34040" strokeWidth="1.500" /><circle cx="8" cy="7" r="2.500" stroke={GREY} /></Icon>,
    anno: <Icon><path d="M7 1h2l1 7 5 7-5-2-2-3-2 3-5 2 5-7z" fill={BLUE} /><path d="M1 4l5 5M6 8l6-1" stroke={BLUE} strokeWidth="2" /><circle cx="11" cy="4" r="3" stroke={BLUE} strokeWidth="2" /></Icon>,
    annoAuto: <Icon><path d="M6 1h2l1 7 6 7-6-3-1-2-2 2-6 3 5-7z" fill={GREY} /><path d="M15 0l-5 4h3l-3 4 6-5h-3z" fill={GREY} /></Icon>,
    annoOne: <Icon><path d="M7 0h2l1 7 6 8-6-3-2-2-2 2-6 3 6-8z" fill={GREY} /></Icon>,
    gear: <Icon w={14}><circle cx="7" cy="7" r="4" stroke={GREY} strokeWidth="3" /><circle cx="7" cy="7" r="6" stroke={GREY} strokeWidth="2" strokeDasharray="2.700 2" /></Icon>,
    plus: <Icon w={15}><path d="M7.500 0v15M0 7.500h15" stroke={GREY} strokeWidth="2" /></Icon>,
    ruler: <Icon w={6} h={14}><path d="M1 0h5v14H1z" fill={GREY} /><path d="M0 3h3M0 6h3M0 9h3M0 12h3" stroke="#555" /></Icon>,
    quick: <Icon w={9} h={11}><path d="M.5.5h8v10h-8zM2 3.500h1M2 5.500h1M2 7.500h1M4 3.500h3M4 5.500h3M4 7.500h3" stroke={GREY} /></Icon>,
    lock: <Icon><path d="M1 12V2h13v4M1 3h13" stroke={GREY} strokeWidth="1.500" /><path d="M1 12h6" stroke={GREY} /><path d="M8 9h7v6H8z" fill={GREY} /><path d="M10 9V6h4v2" stroke={GREY} /></Icon>,
    isolate: <Icon><path d="M1.500 1.500h6v6h-6zM4 14.500h6l-3-5z" stroke={GREY} /><circle cx="12" cy="5" r="2.500" stroke={GREY} /><circle cx="13" cy="12" r="2.500" stroke={GREY} /></Icon>,
    hardware: <Icon w={18}><circle cx="9" cy="9" r="8.500" fill="#1273d6" /><circle cx="9" cy="9" r="6" fill="#0c5cb4" /><path d="M5 9l3 3 5-6" stroke="#36a0ff" strokeWidth="2" /></Icon>,
    export: <Icon><path d="M2 1h7v5H2z" fill="#3784b8" /><path d="M0 6h10v4H0z" fill="#f0d43a" /><path d="M3 9h12v5H3z" fill="#e8eef0" /><path d="M8 5l7 4-3 5-8-1z" fill="#63a83b" /><path d="M3 3h5M4 7h5" stroke="#fff" /></Icon>,
    graph: <Icon w={20} h={16}><path d="M0 1h18v14H0z" fill="#fff" /><path d="M1 12C5 12 5 4 9 4s5 8 8 8" stroke="#444" strokeWidth="1.500" /><path d="M15 8l5 8H11z" fill="#e0601b" /><path d="M15.500 11v3" stroke="#fff" /></Icon>,
    full: <Icon><path d="M.5 2.500h15v11H.5z" stroke={GREY} /><path d="M3 8v4h4zM13 8V4H9z" fill={GREY} /><path d="M4 11l3-3M12 5L9 8" stroke={GREY} /></Icon>,
    menu: <Icon><path d="M0 3h16M0 8h16M0 13h16" stroke={GREY} strokeWidth="2" /></Icon>,
};

// [icon, width, separator before it]
const groupB = [
    ["infer", 24], ["dyn", 25, 1], ["ortho", 25, 1], ["polar", 24], ["caret", 15], ["iso", 24], ["caret", 15],
    ["track", 26, 1], ["osnap", 22], ["caret", 18], ["weight", 25, 1], ["trans", 23, 1], ["cycle", 25, 1], ["osnap3d", 25, 1], ["caret", 15],
];

const Cells = ({ items }) => items.map(([name, w, sep], i) => (
    <StatusCell key={i} $w={w} $sep={sep} aria-label={name}>{st[name]}</StatusCell>
));

function Status() {
    return (
        <StatusBar>
            <StatusGroup><Coords $w={181}>-3043.0391, 7408.6864, 0.0000</Coords></StatusGroup>
            <StatusGroup><StatusCell $w={28} $bold>模型</StatusCell></StatusGroup>
            <StatusGroup><Cells items={[["grid", 24], ["dots", 22], ["caret", 16]]} /></StatusGroup>
            <StatusGroup><Cells items={groupB} /></StatusGroup>
            <StatusGroup><Cells items={[["ucs", 24], ["cube", 24], ["caret", 15], ["gizmo", 24], ["caret", 15]]} /></StatusGroup>
            <StatusGroup>
                <Cells items={[["anno", 25], ["annoAuto", 23], ["annoOne", 24]]} />
                <StatusSelect>
                    <select aria-label="注释比例"><option>1:1 / 100%</option></select>
                    <Caret />
                </StatusSelect>
            </StatusGroup>
            <StatusGroup><Cells items={[["gear", 25], ["caret", 14], ["plus", 25, 1]]} /></StatusGroup>
            <StatusGroup>
                <Cells items={[["ruler", 24]]} />
                <StatusSelect $bold>
                    <select aria-label="单位"><option>小数</option></select>
                    <Caret />
                </StatusSelect>
                <Cells items={[["quick", 25, 1]]} />
            </StatusGroup>
            <StatusGroup><Cells items={[["lock", 24], ["caret", 15], ["isolate", 25, 1]]} /></StatusGroup>
            <StatusGroup><Cells items={[["hardware", 25]]} /></StatusGroup>
            <StatusGroup><Cells items={[["export", 21], ["graph", 27]]} /></StatusGroup>
            <StatusGroup><Cells items={[["full", 25], ["menu", 23]]} /></StatusGroup>
        </StatusBar>
    );
}

export default function App() {
    return (
        <Page>
            <GlobalStyle />
            <TopBar />
            <RibbonBar />
            <Workspace>
                <DrawArea>
                    <DrawingCanvas />
                    <Command />
                </DrawArea>
                <ToolPalette />
            </Workspace>
            <LayoutTabs>
                <LayoutTab $active>模型</LayoutTab>
                <LayoutTab>布局1</LayoutTab>
                <LayoutTab>布局2</LayoutTab>
                <AddTab aria-label="新建布局"><Icon w={9}><path d="M4.500 0v9M0 4.500h9" stroke="#ccc" strokeWidth="2" /></Icon></AddTab>
            </LayoutTabs>
            <Status />
        </Page>
    );
}
